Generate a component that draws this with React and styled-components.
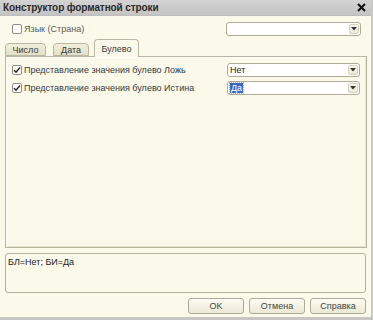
import React from "react";
import styled, { createGlobalStyle } from "styled-components";

const GlobalStyle = createGlobalStyle`
  html, body { margin: 0; padding: 0; background: #fbf9ea; }
  body { font-family: "Liberation Sans", Arial, sans-serif; }
  * { box-sizing: border-box; }
`;

const Window = styled.div`
  width: 373px;
  height: 320px;
  display: flex;
  flex-direction: column;
  background: #fbf9ea;
  border-right: 2px solid #c9c9c6;
  border-bottom: 3px solid #c6c6c3;
`;

const TitleBar = styled.div`
  height: 16px;
  flex: none;
  display: flex;
  align-items: center;
  justify-content: space-between;
  padding: 0 5px 0 3px;
  background: linear-gradient(#d3d3d3, #c4c4c4);
  border-bottom: 1px solid #bdbdbd;
`;

const Title = styled.span`
  font-size: 10px;
  font-weight: bold;
  color: #2a2a2a;
  letter-spacing: -0.1px;
`;

const Body = styled.div`
  flex: 1;
  display: flex;
  flex-direction: column;
  padding: 5px 5px 4px 5px;
`;

const TopRow = styled.div`
  height: 15px;
  display: flex;
  align-items: center;
  justify-content: space-between;
  padding: 0 5px 0 7px;
`;

const Label = styled.label`
  display: flex;
  align-items: center;
  gap: 2px;
  font-size: 9px;
  color: ${(p) => (p.$muted ? "#5a5a5a" : "#383838")};
  white-space: nowrap;
`;

const Box = styled.span`
  width: 10px;
  height: 10px;
  flex: none;
  border: 1px solid #8d8d86;
  border-radius: 2px;
  background: #fff;
  display: flex;
  align-items: center;
  justify-content: center;
`;

const Select = styled.div`
  width: ${(p) => p.$w}px;
  height: 14px;
  display: flex;
  align-items: center;
  justify-content: space-between;
  background: #fff;
  border: 1px solid #aeab97;
  border-radius: 3px;
  padding: 0 1px 0 2px;
  font-size: 9px;
  color: #222;
`;

const ArrowBtn = styled.span`
  width: 10px;
  height: 10px;
  border: 1px solid #d6d3bd;
  border-radius: 2px;
  background: linear-gradient(#fbfaf0, #ebe8d4);
  display: flex;
  align-items: center;
  justify-content: center;
`;

const Highlight = styled.span`
  background: #3b68c2;
  color: #fff;
  padding: 0 1px;
  outline: 1px dotted #9db4e4;
  line-height: 10px;
`;

const Tabs = styled.div`
  height: 17px;
  margin-top: 3px;
  display: flex;
  align-items: flex-end;
  position: relative;
  z-index: 1;
`;

const Tab = styled.div`
  height: ${(p) => (p.$active ? 18 : 13)}px;
  width: ${(p) => p.$w}px;
  margin-right: ${(p) => p.$gap}px;
  display: flex;
  align-items: center;
  justify-content: center;
  font-size: 9px;
  color: #383838;
  border: 1px solid #b9b6a1;
  border-bottom: ${(p) => (p.$active ? "none" : "1px solid #b9b6a1")};
  border-radius: 4px 4px 0 0;
  background: ${(p) =>
    p.$active ? "#fbf9ea" : "linear-gradient(#f1eedb, #e3e0c8)"};
  margin-bottom: ${(p) => (p.$active ? -1 : 0)}px;
  padding-top: ${(p) => (p.$active ? 1 : 0)}px;
`;

const Panel = styled.div`
  height: 192px;
  margin-right: -1px;
  border: 1px solid #b7b4a0;
  box-shadow: inset 1px 1px 0 #fffef8, inset -1px -1px 0 #e6e3cf;
  display: flex;
  flex-direction: column;
  gap: 4px;
  padding: 6px 6px 0 6px;
`;

const Row = styled.div`
  height: 14px;
  display: flex;
  align-items: center;
  justify-content: space-between;
`;

const TextArea = styled.div`
  height: 40px;
  margin-top: 5px;
  border: 1px solid #b3b09c;
  border-radius: 3px;
  padding: 3px 2px;
  font-size: 9px;
  color: #222;
`;

const Buttons = styled.div`
  display: flex;
  justify-content: flex-end;
  gap: 5px;
  margin-top: 5px;
`;

const Button = styled.div`
  width: 56px;
  height: 16px;
  display: flex;
  align-items: center;
  justify-content: center;
  border: 1px solid #aeab98;
  border-radius: 3px;
  background: linear-gradient(#fdfcf4, #ebe8d5);
  font-size: 9px;
  color: #444;
`;

const Check = ({ on }) => (
  <Box>
    {on && (
      <svg width="8" height="8" viewBox="0 0 8 8">
        <path d="M1 4.2 L3 6.2 L7 1.5" fill="none" stroke="#222" strokeWidth="1.4" />
      </svg>
    )}
  </Box>
);

const Arrow = () => (
  <ArrowBtn>
    <svg width="6" height="4" viewBox="0 0 6 4">
      <path d="M0 0 H6 L3 3.5 Z" fill="#333" />
    </svg>
  </ArrowBtn>
);

export default function App() {
  return (
    <>
      <GlobalStyle />
      <Window>
        <TitleBar>
          <Title>Конструктор форматной строки</Title>
          <svg width="9" height="9" viewBox="0 0 9 9">
            <path d="M1 1 L8 8 M8 1 L1 8" stroke="#111" strokeWidth="2" />
          </svg>
        </TitleBar>
        <Body>
          <TopRow>
            <Label $muted>
              <Check />
              Язык (Страна)
            </Label>
            <Select $w={135}>
              <span />
              <Arrow />
            </Select>
          </TopRow>
          <Tabs>
            <Tab $w={41} $gap={7}>Число</Tab>
            <Tab $w={36} $gap={5}>Дата</Tab>
            <Tab $w={45} $gap={0} $active>Булево</Tab>
          </Tabs>
          <Panel>
            <Row>
              <Label>
                <Check on />
                Представление значения булево Ложь
              </Label>
              <Select $w={133}>
                <span>Нет</span>
                <Arrow />
              </Select>
            </Row>
            <Row>
              <Label>
                <Check on />
                Представление значения булево Истина
              </Label>
              <Select $w={133}>
                <Highlight>Да</Highlight>
                <Arrow />
              </Select>
            </Row>
          </Panel>
          <TextArea>БЛ=Нет; БИ=Да</TextArea>
          <Buttons>
            <Button>OK</Button>
            <Button>Отмена</Button>
            <Button>Справка</Button>
          </Buttons>
        </Body>
      </Window>
    </>
  );
}
